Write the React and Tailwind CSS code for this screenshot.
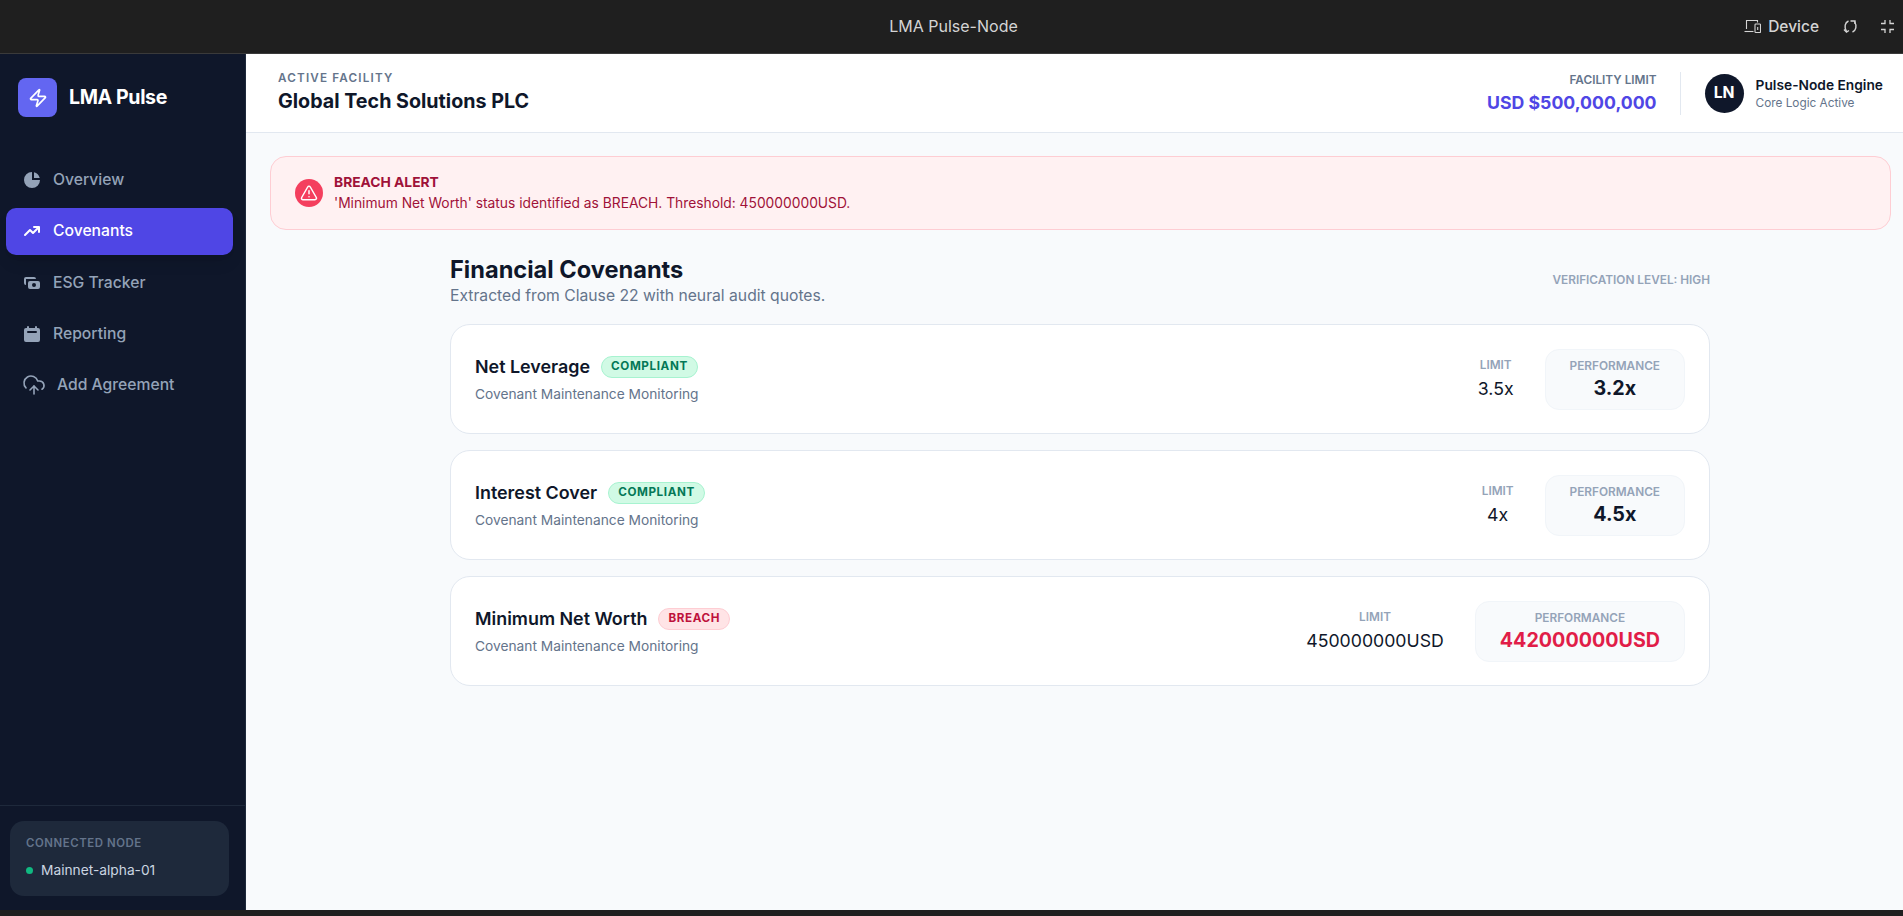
import { Zap, TriangleAlert, CloudUpload } from 'lucide-react';
import { HiChartPie, HiTrendingUp, HiCash, HiCalendar } from 'react-icons/hi';

function NavItem({ icon, label, active }) {
  return (
    <div className={`flex items-center gap-[11px] h-[47px] pl-[16px] rounded-[10px] text-[15.7px] font-medium ${active ? 'bg-[#4f46e5] text-white shadow-lg' : 'text-[#94a3b8]'}`}>
      {icon}
      <span>{label}</span>
    </div>
  );
}

function Covenant({ name, status, limit, perf }) {
  const breach = status === 'BREACH';
  return (
    <div className="flex items-center justify-between h-[110px] px-6 bg-white border border-[#e2e8f0] rounded-[20px]">
      <div>
        <div className="flex items-center gap-[11px]">
          <h3 className="-mt-[1px] text-[17.9px] leading-[26px] font-semibold text-[#0f172a]">{name}</h3>
          <span className={`px-[9px] h-[22px] flex items-center rounded-full border text-[11.7px] font-bold tracking-[0.05em] ${breach ? 'bg-[#ffe4e6] border-[#fecdd3] text-[#be123c]' : 'bg-[#d1fae5] border-[#a7f3d0] text-[#047857]'}`}>{status}</span>
        </div>
        <p className="mt-[4px] text-[13.75px] leading-[20px] text-[#64748b]">Covenant Maintenance Monitoring</p>
      </div>
      <div className="flex items-center gap-[31px]">
        <div className="text-center">
          <div className="text-[11.8px] leading-[16px] font-semibold text-[#94a3b8]">LIMIT</div>
          <div className="mt-[3px] text-[17.7px] leading-[26px] text-[#0f172a]">{limit}</div>
        </div>
        <div className="h-[61px] px-6 flex flex-col justify-center text-center bg-[#f8fafc] border border-[#f1f5f9] rounded-[14px]">
          <div className="text-[11.8px] leading-[16px] font-semibold text-[#94a3b8]">PERFORMANCE</div>
          <div className={`mt-[1px] text-[19.7px] leading-[26px] font-bold ${breach ? 'text-[#e11d48]' : 'text-[#0f172a]'}`}>{perf}</div>
        </div>
      </div>
    </div>
  );
}

export default function App() {
  return (
    <div className="h-[916px] flex flex-col overflow-hidden bg-[#1f1f1f] font-['Inter',sans-serif]">
      {/* window bar */}
      <div className="relative h-[54px] shrink-0 flex items-center justify-end pr-[8px] bg-[#1f1f1f] border-b border-[#3a3a3a] text-[#d4d4d4]">
        <span className="absolute top-[14px] left-[4px] right-0 text-center text-[16px] leading-[24px] pointer-events-none">LMA Pulse-Node</span>
        <div className="flex items-center gap-[7px] text-[15.5px] font-medium">
          <svg width="17" height="15" viewBox="0 0 17 15" fill="none" stroke="currentColor" strokeWidth="1.1">
            <path d="M2.5 10V1.5h11V3.5" />
            <path d="M0.5 12.5h9" />
            <rect x="11" y="5" width="5.5" height="8.5" rx="0.8" />
            <path d="M13.7 8v3" />
          </svg>
          <span>Device</span>
        </div>
        <svg className="ml-[24px]" width="15" height="15" viewBox="0 0 15 15" fill="none" stroke="currentColor" strokeWidth="1.4">
          <path d="M5.5 2C2 3.5 .8 8 3.5 12.5" />
          <path d="M1 10.5l2.5 2.5 2.5-1.5" />
          <path d="M9.5 13c3.5-1.5 4.7-6 2-10.5" />
          <path d="M7.5 2h4.5v3" />
        </svg>
        <svg className="ml-[22px]" width="15" height="15" viewBox="0 0 15 15" fill="none" stroke="currentColor" strokeWidth="1.3">
          <path d="M5 1v3.5H1" />
          <path d="M10 1v3.5h4" />
          <path d="M5 14v-3.5H1" />
          <path d="M10 14v-3.5h4" />
        </svg>
      </div>

      <div className="h-[856px] shrink-0 flex">
        {/* sidebar */}
        <aside className="w-[246px] shrink-0 flex flex-col bg-[#0f172a] border-r border-[#1e293b]">
          <div className="h-[102px] pt-[24px] pl-[18px]">
            <div className="flex items-center gap-[12px]">
              <div className="w-[39px] h-[39px] flex items-center justify-center rounded-[8px] bg-[#6366f1]">
                <Zap size={20} strokeWidth={2} className="text-white" />
              </div>
              <span className="text-[19.6px] font-bold text-white tracking-[-0.02em]">LMA Pulse</span>
            </div>
          </div>
          <nav className="flex flex-col gap-[4.5px] pl-[6px] pr-[12px]">
            <NavItem icon={<HiChartPie size={20} />} label="Overview" />
            <NavItem active icon={<HiTrendingUp size={20} />} label="Covenants" />
            <NavItem icon={<HiCash size={20} />} label="ESG Tracker" />
            <NavItem icon={<HiCalendar size={20} />} label="Reporting" />
            <div className="flex items-center gap-[11px] h-[47px] -mt-[1px] pl-[16px] text-[15.7px] font-medium text-[#94a3b8]">
              <CloudUpload size={24} strokeWidth={1.6} />
              <span>Add Agreement</span>
            </div>
          </nav>
          <div className="mt-auto border-t border-[#1e293b] pl-[10px] pr-[16px] pt-[15px] pb-[14px]">
            <div className="h-[75px] px-[16px] pb-[2px] flex flex-col justify-center bg-[#1e293b] rounded-[14px]">
              <div className="text-[11.4px] leading-[16px] font-semibold tracking-[0.05em] text-[#64748b]">CONNECTED NODE</div>
              <div className="mt-[9px] flex items-center gap-[8px] text-[13.75px] leading-[20px] text-[#cbd5e1]">
                <span className="w-[7px] h-[7px] rounded-full bg-[#10b981]" />
                Mainnet-alpha-01
              </div>
            </div>
          </div>
        </aside>

        {/* main */}
        <main className="flex-1 min-w-0 flex flex-col bg-[#f8fafc]">
          <header className="h-[79px] shrink-0 flex items-center justify-between pl-[32px] pr-[20px] bg-white border-b border-[#e2e8f0]">
            <div className="-mt-[2px]">
              <div className="text-[11.7px] leading-[16px] font-semibold tracking-[0.1em] text-[#64748b]">ACTIVE FACILITY</div>
              <div className="mt-[2px] text-[19.7px] leading-[26px] font-bold text-[#0f172a]">Global Tech Solutions PLC</div>
            </div>
            <div className="flex items-center">
              <div className="text-right pr-[23px] border-r border-[#e2e8f0]">
                <div className="text-[11.8px] leading-[16px] font-semibold text-[#64748b]">FACILITY LIMIT</div>
                <div className="mt-[3px] text-[17.7px] leading-[24px] font-bold text-[#4f46e5]">USD $500,000,000</div>
              </div>
              <div className="flex items-center gap-[12px] pl-[24px]">
                <div className="w-[39px] h-[39px] flex items-center justify-center rounded-full bg-[#0f172a] text-white text-[15.7px] font-bold">LN</div>
                <div>
                  <div className="text-[13.75px] leading-[18px] font-semibold text-[#0f172a]">Pulse-Node Engine</div>
                  <div className="mt-[1px] text-[11.8px] leading-[16px] text-[#64748b]">Core Logic Active</div>
                </div>
              </div>
            </div>
          </header>

          <div className="flex-1 pl-[24px] pr-[12px] pt-[23px]">
            <div className="h-[74px] flex items-center gap-[11px] pl-[24px] bg-[#fff1f2] border border-[#fecdd3] rounded-[16px]">
              <div className="w-[28px] h-[28px] flex items-center justify-center rounded-full bg-[#f43f5e]">
                <TriangleAlert size={18} strokeWidth={2} className="text-white" />
              </div>
              <div className="text-[13.8px] leading-[21px] text-[#9f1239]">
                <div className="font-bold">BREACH ALERT</div>
                <div>'Minimum Net Worth' status identified as BREACH. Threshold: 450000000USD.</div>
              </div>
            </div>

            <div className="w-[1260px] ml-[180px] mt-[24px]">
              <div className="flex items-center justify-between">
                <div>
                  <h2 className="text-[23.6px] leading-[32px] font-bold text-[#0f172a]">Financial Covenants</h2>
                  <p className="text-[15.7px] leading-[20px] text-[#64748b]">Extracted from Clause 22 with neural audit quotes.</p>
                </div>
                <span className="mt-[1px] text-[11.8px] font-semibold text-[#94a3b8]">VERIFICATION LEVEL: HIGH</span>
              </div>
              <div className="mt-[18px] flex flex-col gap-[16px]">
                <Covenant name="Net Leverage" status="COMPLIANT" limit="3.5x" perf="3.2x" />
                <Covenant name="Interest Cover" status="COMPLIANT" limit="4x" perf="4.5x" />
                <Covenant name="Minimum Net Worth" status="BREACH" limit="450000000USD" perf="442000000USD" />
              </div>
            </div>
          </div>
        </main>
      </div>
    </div>
  );
}
